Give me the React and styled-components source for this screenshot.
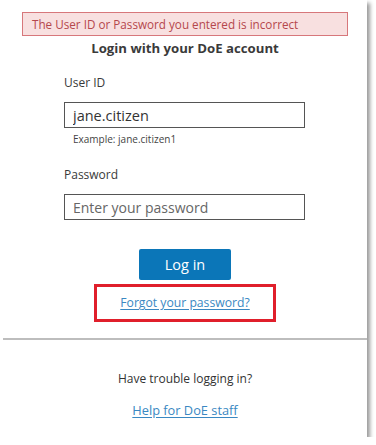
import React from "react";
import styled, { createGlobalStyle } from "styled-components";

const Global = createGlobalStyle`
  html, body { margin: 0; padding: 0; background: #ffffff; }
  body { font-family: "Open Sans", "Liberation Sans", sans-serif; color: #333; }
`;

const Card = styled.div`
  width: 367px;
  height: 437px;
  box-sizing: border-box;
  background: #fff;
  box-shadow: 3px 3px 4px rgba(0, 0, 0, 0.4);
  padding-top: 12px;
  display: flex;
  flex-direction: column;
`;

const ErrorBox = styled.div`
  margin-left: 22px;
  width: 326px;
  height: 24px;
  box-sizing: border-box;
  border: 1px solid #d7777b;
  background: #f8e0e0;
  color: #b5474c;
  font-size: 11.7px;
  line-height: 22px;
  padding-left: 9px;
`;

const Heading = styled.h1`
  margin: 3px 0 0;
  text-align: center;
  font-size: 13.2px;
  font-weight: 700;
  line-height: 18px;
  color: #3a3a3a;
  padding-left: 3px;
`;

const Form = styled.form`
  margin: 0 0 0 64px;
  width: 241px;
  display: flex;
  flex-direction: column;
`;

const Label = styled.label`
  font-size: 12px;
  line-height: 16px;
  color: #3a3a3a;
  margin-top: ${(p) => p.$top}px;
`;

const Input = styled.input`
  margin-top: ${(p) => p.$top}px;
  width: 241px;
  height: 26px;
  box-sizing: border-box;
  border: 1.5px solid #555;
  padding: 0 8px;
  font-family: inherit;
  font-size: ${(p) => p.$size}px;
  color: #333;
  outline: none;
  &::placeholder { color: #666; }
`;

const Hint = styled.div`
  margin-top: 5px;
  padding-left: 9px;
  font-size: 10px;
  line-height: 13px;
  color: #444;
`;

const Center = styled.div`
  display: flex;
  flex-direction: column;
  align-items: center;
  margin-top: ${(p) => p.$top || 0}px;
  padding-left: 3px;
`;

const Button = styled.button`
  width: 92px;
  height: 31px;
  border: none;
  border-radius: 2px;
  background: #0b76b8;
  color: #fff;
  font-family: inherit;
  font-size: 14.5px;
  padding: 0;
`;

const Highlight = styled.div`
  margin-top: 4px;
  width: 182px;
  height: 38px;
  box-sizing: border-box;
  border: 3px solid #e01f2b;
  display: flex;
  align-items: center;
  justify-content: center;
  padding-bottom: 1px;
`;

const Link = styled.a`
  color: #3a88c2;
  font-size: ${(p) => p.$size || 12}px;
  text-decoration: underline;
  text-underline-offset: 2px;
  cursor: pointer;
`;

const Divider = styled.hr`
  margin: 16px 0 0 3px;
  width: 364px;
  height: 2px;
  border: none;
  background: #bdbdbd;
`;

const Text = styled.div`
  font-size: 12px;
  color: #333;
  line-height: 16px;
`;

const Spacer = styled.div`
  height: ${(p) => p.$h}px;
`;

export default function App() {
  return (
    <>
      <Global />
      <Card>
        <ErrorBox>The User ID or Password you entered is incorrect</ErrorBox>
        <Heading>Login with your DoE account</Heading>
        <Form onSubmit={(e) => e.preventDefault()}>
          <Label $top={18}>User ID</Label>
          <Input $top={11} $size={14.5} defaultValue="jane.citizen" />
          <Hint>Example: jane.citizen1</Hint>
          <Label $top={21}>Password</Label>
          <Input $top={11} $size={14} type="password" placeholder="Enter your password" />
        </Form>
        <Center $top={29}>
          <Button>Log in</Button>
          <Highlight>
            <Link $size={12.2}>Forgot your password?</Link>
          </Highlight>
        </Center>
        <Divider />
        <Center $top={31}>
          <Text>Have trouble logging in?</Text>
          <Spacer $h={14} />
          <Link $size={12.8}>Help for DoE staff</Link>
        </Center>
      </Card>
    </>
  );
}
